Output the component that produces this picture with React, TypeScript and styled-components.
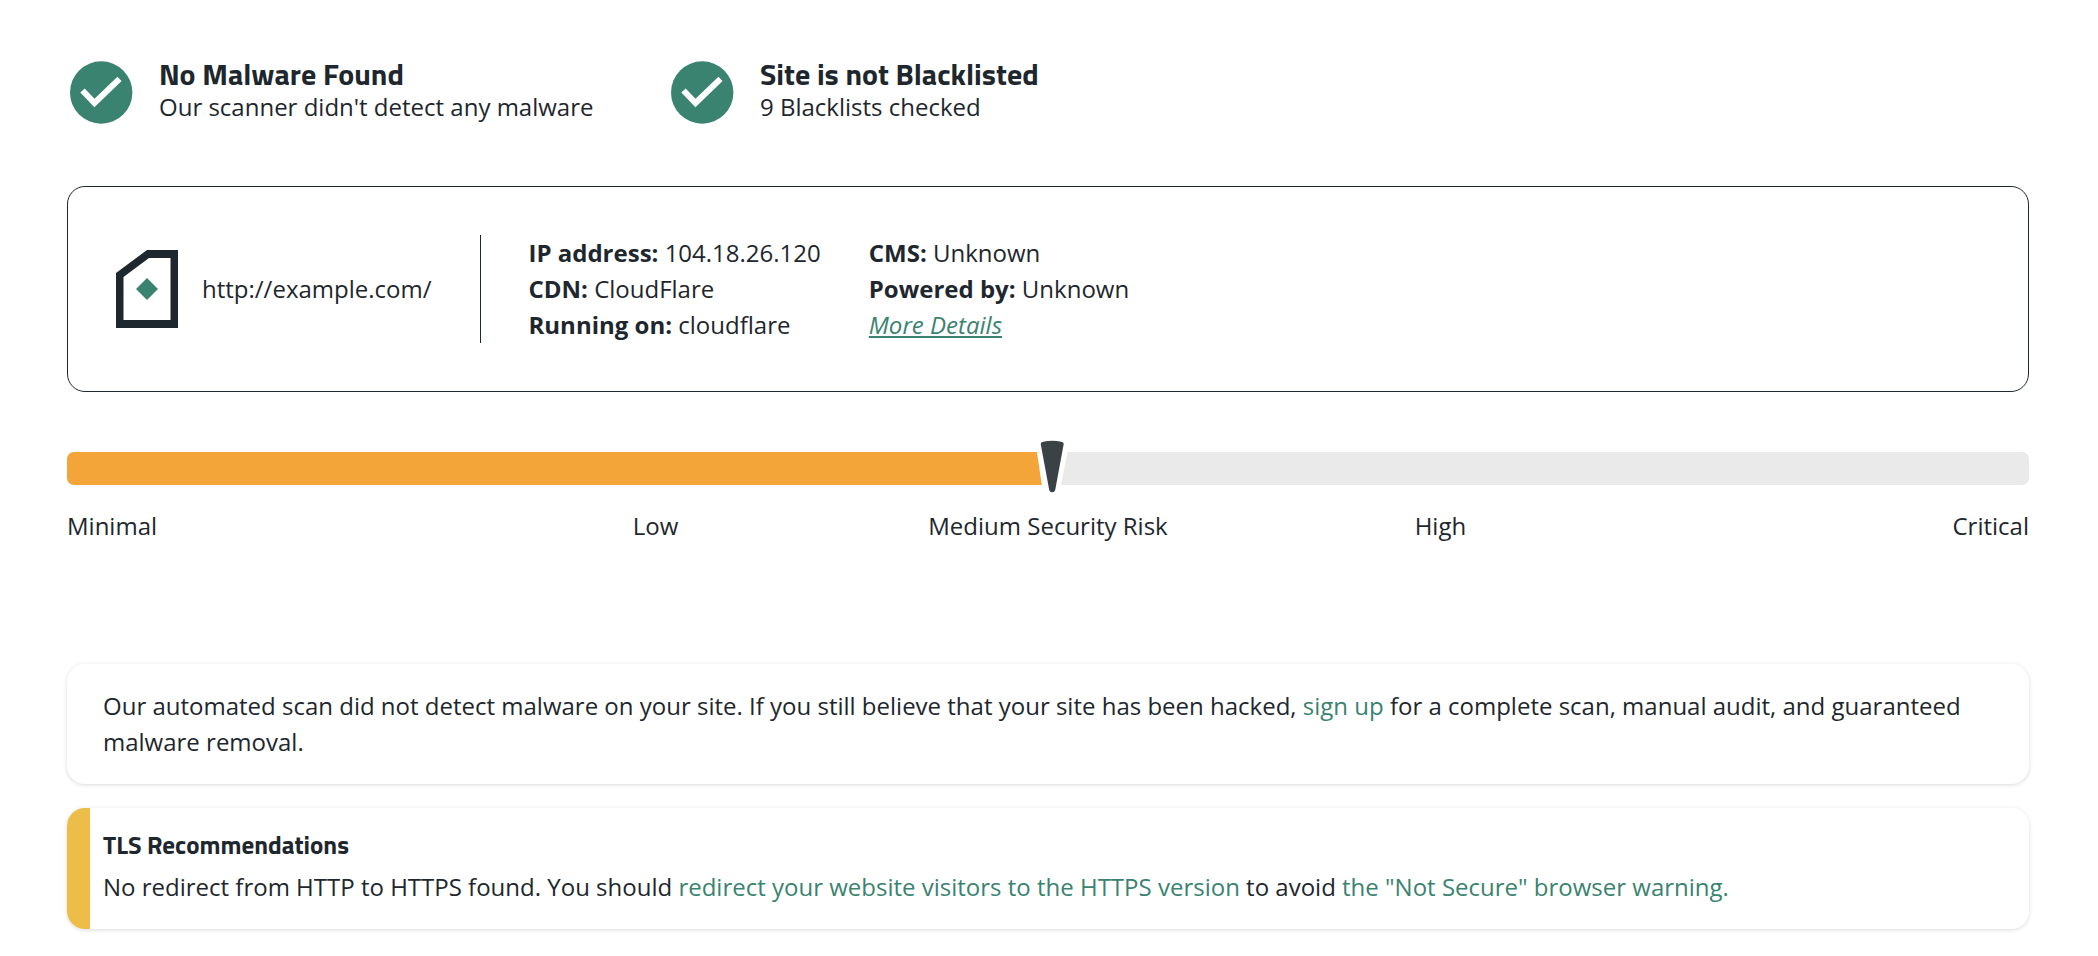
import React from 'react';
import styled, { createGlobalStyle } from 'styled-components';

const ink = '#1e272d';
const green = '#3a8370';

const GlobalStyle = createGlobalStyle`
  * { box-sizing: border-box; }
  body {
    margin: 0;
    background: #fff;
    color: ${ink};
    font-family: 'Open Sans', 'Liberation Sans', sans-serif;
    font-size: 24px;
    line-height: 36px;
  }
  h2, h3, p, dl, dd, ul { margin: 0; padding: 0; }
`;

const Page = styled.main`
  padding: 59px 69px 24px 67px;
`;

const StatusRow = styled.section`
  display: flex;
  padding-left: 3px;
`;

const Status = styled.div`
  display: flex;
  align-items: center;
  gap: 26px;
  width: 601px;
`;

const Title = styled.h2`
  font-family: 'Titillium Web', Roboto, 'Open Sans', sans-serif;
  font-size: 30px;
  font-weight: 700;
  line-height: 30px;
`;

const CheckIcon = styled.svg`
  flex: none;
  width: 63px;
  height: 63px;
`;

const SiteCard = styled.section`
  display: flex;
  align-items: center;
  margin-top: 61px;
  padding: 48px;
  border: 1px solid ${ink};
  border-radius: 18px;
`;

const Site = styled.div`
  display: flex;
  align-items: center;
  gap: 24px;
  height: 108px;
  padding-right: 48px;
  border-right: 1px solid ${ink};
`;

const Details = styled.dl`
  align-self: flex-start;
  padding-left: 48px;
`;

const Detail = styled.div`
  dt, dd { display: inline; }
  dt { font-weight: 700; }
`;

const Link = styled.a<{ $emphasis?: boolean }>`
  color: ${green};
  font-style: ${(p) => (p.$emphasis ? 'italic' : 'normal')};
  text-decoration: ${(p) => (p.$emphasis ? 'underline' : 'none')};
`;

const Risk = styled.section`
  margin-top: 60px;
`;

const Track = styled.div`
  position: relative;
  height: 33px;
  border-radius: 7px;
  background: #eaeaea;
`;

const Fill = styled.div`
  height: 100%;
  border-radius: 7px 0 0 7px;
  background: #f4a53a;
`;

const Pointer = styled.svg`
  position: absolute;
  top: -15px;
  width: 36px;
  height: 60px;
  transform: translateX(-50%);
`;

const Scale = styled.ul`
  display: grid;
  grid-template-columns: repeat(5, 1fr);
  justify-items: center;
  margin-top: 23px;
  list-style: none;

  li:first-child { justify-self: start; }
  li:last-child { justify-self: end; }
`;

const Messages = styled.section`
  display: grid;
  gap: 24px;
  margin-top: 120px;
`;

const Message = styled.article<{ $warning?: boolean }>`
  padding: 24px 36px;
  border-radius: 18px;
  background: ${(p) =>
    p.$warning ? 'linear-gradient(to right, #ecbe49 23px, #fff 23px)' : '#fff'};
  box-shadow: 0 1px 4px rgba(0, 0, 0, 0.15);
`;

const MessageTitle = styled.h3`
  margin-bottom: 11px;
  font-family: 'Titillium Web', Roboto, 'Open Sans', sans-serif;
  font-size: 25px;
  font-weight: 700;
  line-height: 26px;
`;

const checks = [
  { title: 'No Malware Found', text: "Our scanner didn't detect any malware" },
  { title: 'Site is not Blacklisted', text: '9 Blacklists checked' },
];

const network = [
  ['IP address:', '104.18.26.120'],
  ['CDN:', 'CloudFlare'],
  ['Running on:', 'cloudflare'],
];

const software = [
  ['CMS:', 'Unknown'],
  ['Powered by:', 'Unknown'],
];

const levels = ['Minimal', 'Low', 'Medium Security Risk', 'High', 'Critical'];
const risk = '50.2%';

const DetailRows = ({ rows }: { rows: string[][] }) => (
  <>
    {rows.map(([name, value]) => (
      <Detail key={name}>
        <dt>{name}</dt> <dd>{value}</dd>
      </Detail>
    ))}
  </>
);

export default function App() {
  return (
    <>
      <GlobalStyle />
      <Page>
        <StatusRow>
          {checks.map((check) => (
            <Status key={check.title}>
              <CheckIcon viewBox="0 0 63 63" aria-hidden="true">
                <circle cx="31.2" cy="31.5" r="31.2" fill={green} />
                <path d="M12.500 29.500 24.500 42 49.500 17.900" fill="none" stroke="#fff" strokeWidth="6" />
              </CheckIcon>
              <div>
                <Title>{check.title}</Title>
                <p>{check.text}</p>
              </div>
            </Status>
          ))}
        </StatusRow>

        <SiteCard>
          <Site>
            <svg width="62" height="78" viewBox="0 0 62 78" aria-hidden="true">
              <path
                d="M31 0H62V78H0V23ZM33 8 7.500 27V70H54.500V8Z"
                fill={ink}
                fillRule="evenodd"
              />
              <path d="M31 28 42 39 31 50 20 39Z" fill={green} />
            </svg>
            <span>http://example.com/</span>
          </Site>
          <Details>
            <DetailRows rows={network} />
          </Details>
          <Details>
            <DetailRows rows={software} />
            <Detail>
              <dd>
                <Link $emphasis href="#details">More Details</Link>
              </dd>
            </Detail>
          </Details>
        </SiteCard>

        <Risk aria-label="Security risk">
          <Track>
            <Fill style={{ width: risk }} />
            <Pointer style={{ left: risk }} viewBox="0 0 36 60" aria-hidden="true">
              <path d="M2.500 12H34.100L26.700 50H8.100Z" fill="#fff" />
              <path
                d="M6.700 7Q6.700 5 9.200 4.700Q18.200 3 27.200 4.700Q29.900 5 29.700 7L21.200 53Q20.700 55.300 18.200 55.300Q15.700 55.300 15.200 53Z"
                fill="#3b4246"
              />
            </Pointer>
          </Track>
          <Scale>
            {levels.map((level) => (
              <li key={level}>{level}</li>
            ))}
          </Scale>
        </Risk>

        <Messages>
          <Message>
            <p>
              Our automated scan did not detect malware on your site. If you still believe that your
              site has been hacked, <Link href="#signup">sign up</Link> for a complete scan, manual
              audit, and guaranteed malware removal.
            </p>
          </Message>
          <Message $warning>
            <MessageTitle>TLS Recommendations</MessageTitle>
            <p>
              No redirect from HTTP to HTTPS found. You should{' '}
              <Link href="#redirect">redirect your website visitors to the HTTPS version</Link> to
              avoid <Link href="#not-secure">the "Not Secure" browser warning.</Link>
            </p>
          </Message>
        </Messages>
      </Page>
    </>
  );
}
